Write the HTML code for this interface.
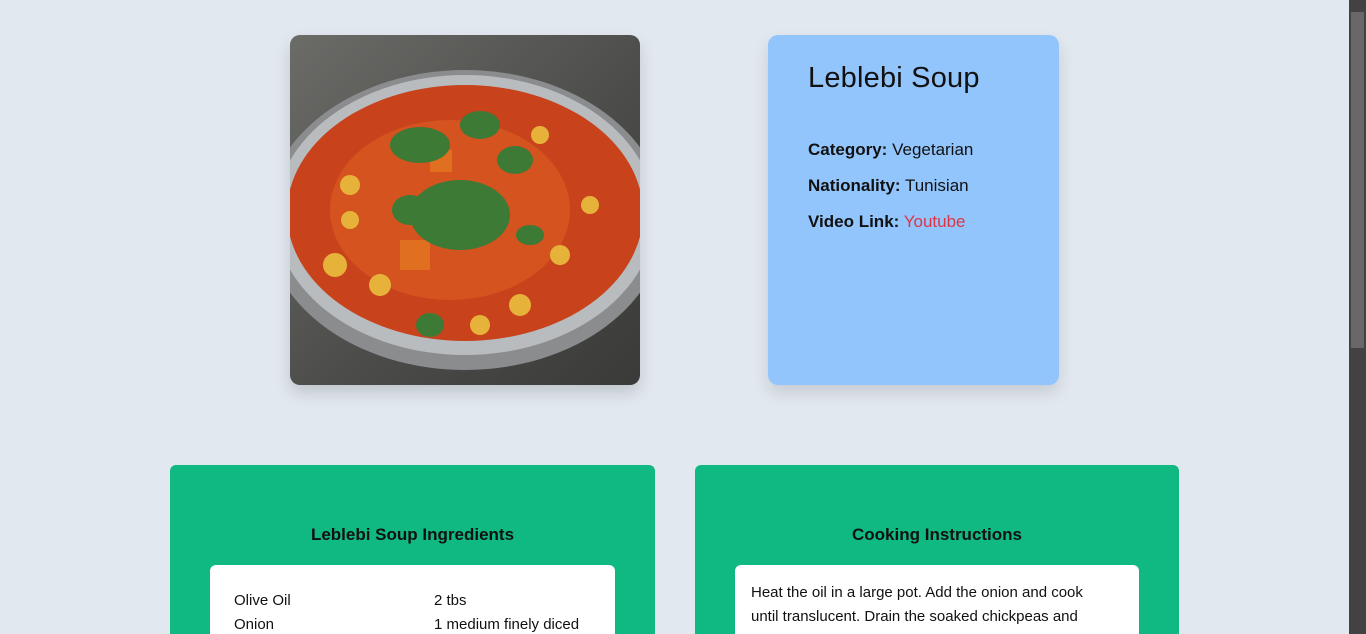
<!DOCTYPE html>
<html><head><meta charset="utf-8"><style>
*{margin:0;padding:0;box-sizing:border-box}
html{height:634px;overflow:hidden}
body{width:1366px;height:634px;overflow:hidden;background:#e2e8f0;font-family:"Liberation Sans",sans-serif;color:#111;position:relative}
.img{position:absolute;left:290px;top:35px;width:350px;height:350px;border-radius:10px;overflow:hidden;background:linear-gradient(135deg,#6b6b68,#4a4a48 60%,#3a3a38);box-shadow:0 8px 16px rgba(0,0,0,.15)}
.info{position:absolute;left:768px;top:35px;width:291px;height:350px;border-radius:10px;background:#93c5fd;box-shadow:0 8px 16px rgba(0,0,0,.12);padding:0 40px}
.info h1{font-weight:normal;font-size:29px;margin-top:27px;letter-spacing:.2px}
.info p{font-size:17px;margin-top:0;line-height:36px}
.info .first{margin-top:37px}
.g{position:absolute;top:465px;height:169px;background:#10b981;border-radius:6px 6px 0 0;overflow:hidden}
.g h2{font-size:17px;font-weight:bold;text-align:center;margin-top:60px;color:#111}
.w{position:absolute;top:100px;background:#fff;border-radius:6px;height:120px}
.sb{position:absolute;left:1349px;top:0;width:17px;height:634px;background:#424242}
.th{position:absolute;left:1351px;top:12px;width:13px;height:336px;background:#686868}
</style></head><body>
<div class="img"><svg width="350" height="350">
<ellipse cx="175" cy="185" rx="200" ry="150" fill="#8a8c8e"/>
<ellipse cx="175" cy="180" rx="190" ry="140" fill="#b8bcbf"/>
<ellipse cx="175" cy="178" rx="178" ry="128" fill="#c8421c"/>
<ellipse cx="160" cy="175" rx="120" ry="90" fill="#d4531f"/>
<g fill="#e6b23a"><circle cx="60" cy="150" r="10"/><circle cx="45" cy="230" r="12"/><circle cx="90" cy="250" r="11"/><circle cx="140" cy="290" r="12"/><circle cx="230" cy="270" r="11"/><circle cx="270" cy="220" r="10"/><circle cx="60" cy="185" r="9"/><circle cx="190" cy="290" r="10"/><circle cx="300" cy="170" r="9"/><circle cx="250" cy="100" r="9"/></g>
<g fill="#e07020"><rect x="110" y="205" width="30" height="30"/><rect x="140" y="115" width="22" height="22"/></g>
<g fill="#3d7a35"><ellipse cx="170" cy="180" rx="50" ry="35"/><ellipse cx="130" cy="110" rx="30" ry="18"/><ellipse cx="190" cy="90" rx="20" ry="14"/><ellipse cx="225" cy="125" rx="18" ry="14"/><ellipse cx="120" cy="175" rx="18" ry="15"/><ellipse cx="140" cy="290" rx="14" ry="12"/><ellipse cx="240" cy="200" rx="14" ry="10"/></g>
</svg></div>
<div class="info"><h1>Leblebi Soup</h1>
<p class="first"><b>Category:</b> Vegetarian</p>
<p><b>Nationality:</b> Tunisian</p>
<p><b>Video Link:</b> <span style="color:#dc3545">Youtube</span></p></div>
<div class="g" style="left:170px;width:485px"><h2>Leblebi Soup Ingredients</h2>
<div class="w" style="left:40px;width:405px;font-size:15px;line-height:24px;padding:24px 24px">
<div style="position:relative">Olive Oil<span style="position:absolute;left:200px">2 tbs</span></div>
<div style="position:relative">Onion<span style="position:absolute;left:200px">1 medium finely diced</span></div></div></div>
<div class="g" style="left:695px;width:484px"><h2>Cooking Instructions</h2>
<div class="w" style="left:40px;width:404px;font-size:15px;line-height:24px;padding:16px 28px 16px 16px">Heat the oil in a large pot. Add the onion and cook until translucent. Drain the soaked chickpeas and</div></div>
<div class="sb"></div><div class="th"></div>
</body></html>
